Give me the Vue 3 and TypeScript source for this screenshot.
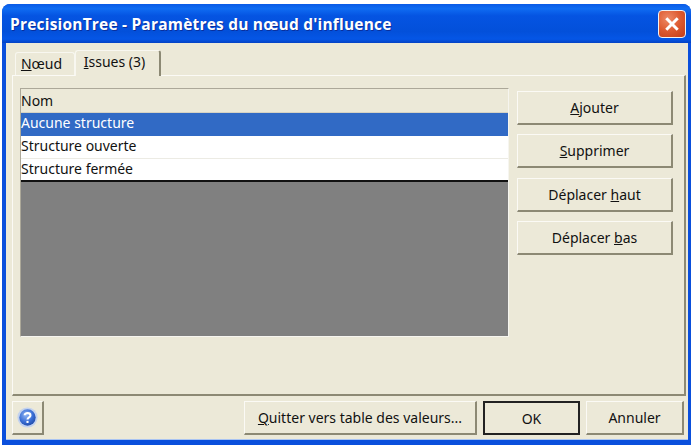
<script setup lang="ts">
const sideButtons = [
  { before: '', key: 'A', after: 'jouter' },
  { before: '', key: 'S', after: 'upprimer' },
  { before: 'Déplacer ', key: 'h', after: 'aut' },
  { before: 'Déplacer ', key: 'b', after: 'as' },
]
const rows = ['Aucune structure', 'Structure ouverte', 'Structure fermée']
</script>

<template>
  <div class="screen">
    <div class="window">
      <header class="titlebar">
        <span class="title">PrecisionTree - Paramètres du nœud d'influence</span>
        <span class="close">
          <svg viewBox="0 0 14 14" width="16" height="16">
            <path d="M2 2 L12 12 M12 2 L2 12" stroke="#fff" stroke-width="2.6" fill="none" />
          </svg>
        </span>
      </header>
      <div class="client">
        <div class="tabs">
          <span class="tab"><u>N</u>œud</span>
          <span class="tab active"><u>I</u>ssues (3)</span>
        </div>
        <div class="pane">
          <div class="listview">
            <div class="head">Nom</div>
            <div
              v-for="(row, i) in rows"
              :key="row"
              class="row"
              :class="{ selected: i === 0 }"
            >{{ row }}</div>
            <div class="empty"></div>
          </div>
          <div class="side">
            <button v-for="b in sideButtons" :key="b.key" class="btn side-btn" type="button">
              {{ b.before }}<u>{{ b.key }}</u>{{ b.after }}
            </button>
          </div>
        </div>
        <div class="footer">
          <button class="btn help" type="button" aria-label="Aide">
            <svg viewBox="0 0 20 20" width="21" height="21">
              <defs>
                <radialGradient id="helpGrad" cx="40%" cy="35%" r="70%">
                  <stop offset="0" stop-color="#8fb4f2" />
                  <stop offset="0.6" stop-color="#3b6fd6" />
                  <stop offset="1" stop-color="#1f4aa8" />
                </radialGradient>
              </defs>
              <circle cx="10" cy="10" r="9.6" fill="#c3d2ee" />
              <circle cx="10" cy="10" r="7.8" fill="url(#helpGrad)" />
              <path d="M7.3 7.8 C7.3 5.2 12.8 5.2 12.8 8 C12.8 10 10 9.8 10 12" stroke="#fff" stroke-width="2" fill="none" />
              <rect x="9" y="13.2" width="2" height="2" fill="#fff" />
            </svg>
          </button>
          <div class="spacer"></div>
          <button class="btn quit" type="button"><u>Q</u>uitter vers table des valeurs...</button>
          <button class="btn ok" type="button">OK</button>
          <button class="btn cancel" type="button">Annuler</button>
        </div>
      </div>
    </div>
  </div>
</template>

<style>
html, body { margin: 0; background: #fff; }
</style>

<style scoped>
.screen {
  width: 692px;
  height: 445px;
  box-sizing: border-box;
  padding: 4px 1px 0 2px;
  background: #fff;
  overflow: hidden;
  font-family: "Noto Sans", "Liberation Sans", Arial, sans-serif;
  font-size: 14px;
  color: #111;
}
.window {
  height: 441px;
  display: flex;
  flex-direction: column;
  border-radius: 8px 8px 0 0;
  background: #0a4fdc;
  overflow: hidden;
}
.titlebar {
  height: 39px;
  flex: none;
  display: flex;
  align-items: center;
  justify-content: space-between;
  padding: 0 5px 0 8px;
  background: linear-gradient(180deg, #0a5ae6 0%, #0f6cf2 12%, #0554e2 30%, #0350da 70%, #0556e6 90%, #0342c4 100%);
}
.title {
  font-family: "Open Sans", "Liberation Sans", sans-serif;
  font-weight: 700;
  font-size: 15.5px;
  color: #fff;
  letter-spacing: 0.2px;
  text-shadow: 1px 1px 0 #0a2f9c;
}
.close {
  width: 28px;
  height: 28px;
  box-sizing: border-box;
  display: flex;
  align-items: center;
  justify-content: center;
  border: 1px solid #f2f2f2;
  border-radius: 4px;
  background: radial-gradient(circle at 35% 30%, #ee8a66 0%, #dd5a30 50%, #c23c18 100%);
}
.client {
  flex: none;
  height: 397px;
  margin: 0 3px 0 4px;
  box-sizing: border-box;
  background: #ece9d8;
  display: flex;
  flex-direction: column;
  border-bottom: 1px solid #a9c4f2;
}
.tabs {
  display: flex;
  align-items: flex-end;
  height: 32px;
  padding-left: 9px;
  flex: none;
}
.tab {
  height: 23px;
  width: 60px;
  box-sizing: border-box;
  text-align: center;
  line-height: 21px;
  padding-right: 7px;
  border: 1px solid #f8f7f0;
  border-bottom: none;
  border-radius: 3px 3px 0 0;
}
.tab.active {
  height: 26px;
  width: 86px;
  line-height: 21px;
  padding-right: 6px;
  background: #ece9d8;
  border-right: 2px solid #8c8974;
  margin-bottom: -1px;
  position: relative;
  z-index: 1;
}
.pane {
  height: 321px;
  flex: none;
  box-sizing: border-box;
  margin: 0 2px 0 6px;
  border-top: 1px solid #fbfaf5;
  border-left: 1px solid #fbfaf5;
  border-right: 2px solid #8c8974;
  border-bottom: 2px solid #8c8974;
  padding: 12px 10px 0 7px;
  display: flex;
  gap: 8px;
}
.listview {
  width: 489px;
  height: 249px;
  flex: none;
  box-sizing: border-box;
  border-top: 1px solid #aca899;
  border-left: 1px solid #aca899;
  border-right: 1px solid #f6f5ef;
  border-bottom: 1px solid #f6f5ef;
  display: flex;
  flex-direction: column;
  background: #808080;
}
.head {
  height: 24px;
  flex: none;
  box-sizing: border-box;
  line-height: 23px;
  background: #ece9d8;
  border-bottom: 1px solid #d6d3c4;
}
.row {
  height: 23px;
  flex: none;
  box-sizing: border-box;
  line-height: 20px;
  background: #fff;
  border-bottom: 1px solid #ecebe4;
}
.row.selected {
  background: #316ac5;
  color: #fff;
  border-bottom: none;
}
.row:nth-child(4) {
  border-bottom: 2px solid #111;
}
.empty { flex: 1; }
.side {
  flex: 1;
  display: flex;
  flex-direction: column;
  gap: 9.4px;
  padding-top: 3px;
}
.btn {
  font: inherit;
  color: inherit;
  padding: 0;
  margin: 0;
  background: #ece9d8;
  box-sizing: border-box;
  border-style: solid;
  border-width: 1px 2px 2px 1px;
  border-color: #fbfaf5 #8c8974 #8c8974 #fbfaf5;
}
.side-btn {
  height: 34px;
  width: 156px;
}
.footer {
  flex: 1;
  display: flex;
  align-items: flex-start;
  padding: 5px 4px 0 6px;
  min-height: 0;
}
.spacer { flex: 1; }
.help {
  width: 32px;
  height: 34px;
  display: flex;
  align-items: center;
  justify-content: center;
}
.quit { width: 233px; height: 34px; }
.ok {
  width: 97px;
  height: 34px;
  margin-left: 6px;
  border: 2px solid #222;
  outline: none;
}
.cancel {
  width: 98px;
  height: 34px;
  margin-left: 6px;
}
</style>
